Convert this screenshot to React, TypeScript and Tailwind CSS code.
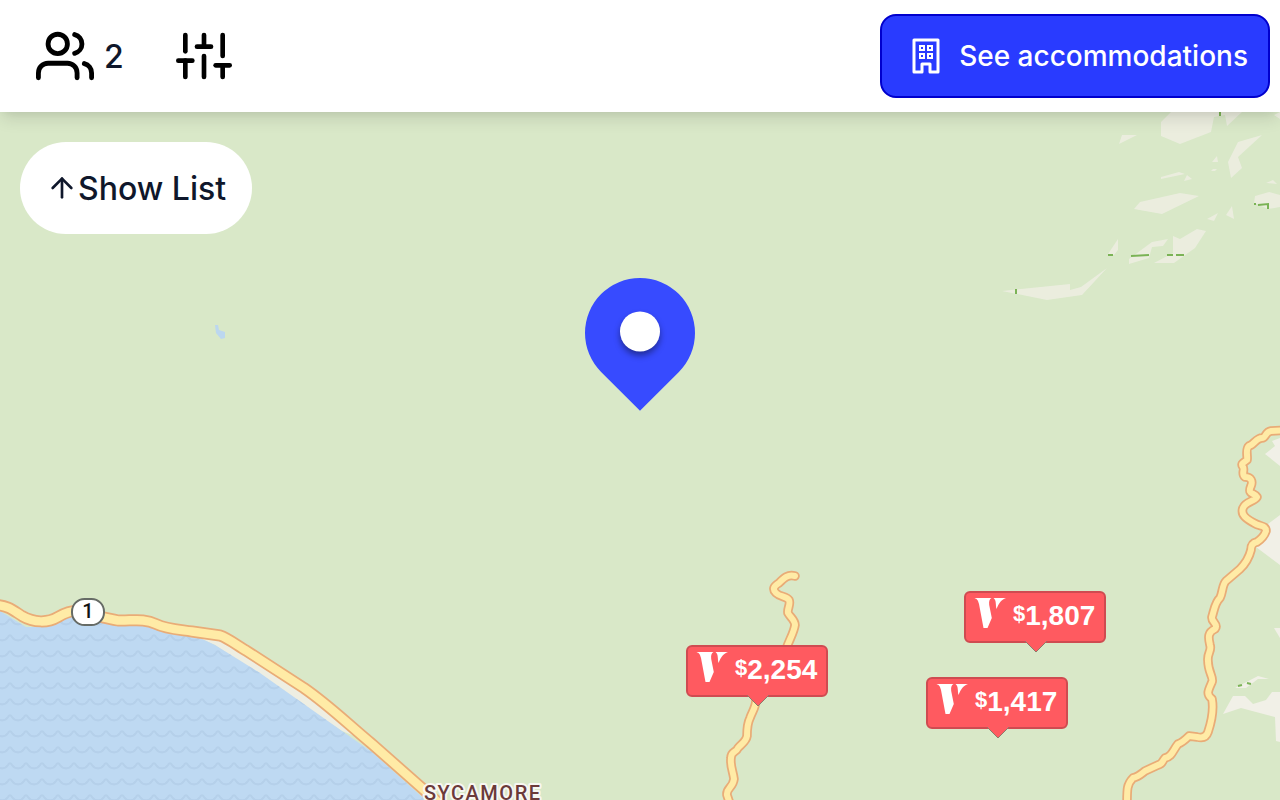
import { FiArrowUp, FiSliders, FiUsers } from 'react-icons/fi'

type Listing = { id: string; price: string; left: string; top: string }

// left / top are relative to the centre of the map
const LISTINGS: Listing[] = [
  { id: 'a', price: '2,254', left: 'left-[calc(50%+46px)]', top: 'top-[calc(50%+189px)]' },
  { id: 'b', price: '1,807', left: 'left-[calc(50%+324px)]', top: 'top-[calc(50%+135px)]' },
  { id: 'c', price: '1,417', left: 'left-[calc(50%+286px)]', top: 'top-[calc(50%+221px)]' },
]

const ROADS = [
  // coast highway
  { w: 8.5, d: 'M-6 605 C8 605 14 611 22 616 C34 623 48 623 58 617 C68 611 76 609 86 612 C98 617 106 618 118 620.500 C132 621 144 618 156 624 C166 629 178 629.500 192 631.500 L220 635.500 C228 638 238 646 246 650.500 L304 688 C330 706 350 726 372 744 L440 804' },
  // canyon road
  { w: 6, d: 'M795 576 C788 574 784 578 779 583 C774 586 772 589 776 593 C780 597 786 596 789 600 C791 604 787 609 788 613 C790 617 795 620 795 625 C794 633 788 642 786 650 L756 700 C756 707 752 712 750 718 C747 724 747 730 747 736 C746 742 741 744 738 748 C736 753 731 751 731 758 C730 766 733 771 734 779 C733 788 726 788 727 795 L730 804' },
  { w: 6, d: 'M1286 430 L1271 431 C1265 432 1266 438 1262 438 C1256 438 1254 445 1249 446 C1245 449 1248 457 1247 460 C1245 462 1240 463 1243 467 C1245 470 1241 474 1245 477 C1251 477 1253 481 1251 486 C1247 495 1254 492 1257 497 C1254 502 1246 501 1243 508 C1240 516 1249 520 1254 523 C1260 527 1266 525 1266 531 C1264 537 1260 540 1257 542 C1252 543 1251 546 1251 550 C1249 558 1245 564 1240 569 L1226 581 C1222 585 1223 592 1220 598 C1215 602 1214 611 1212 617 C1211 622 1219 624 1215 629 C1208 632 1208 637 1210 645 C1212 651 1207 653 1208 661 C1208 672 1214 678 1212 682 C1208 691 1206 694 1212 699 C1214 710 1211 723 1208 732 C1206 738 1201 738 1197 737 L1189 736 C1184 741 1181 743 1178 744 C1173 750 1172 757 1165 758 C1162 761 1163 764 1158 765 L1145 771 C1140 775 1138 777 1133 778 C1127 784 1127 789 1127 804' },
]

const CLEARINGS = [
  'M1171 112 L1161 122 V136 L1180 144 L1211 132 L1214 117 L1225 115 L1227 126 L1242 112Z',
  'M1122 135 L1137 135 L1119 144Z',
  'M1262 135 L1238 142 L1228 162 L1231 178 L1242 168 L1238 157Z',
  'M1212 162 L1217 156 L1218 162Z',
  'M1211 171 L1213 169 L1217 169 L1215 171Z',
  'M1161 177 L1179 172 L1185 174 L1161 179Z',
  'M1184 181 L1187 175 L1192 179Z',
  'M1134 209 L1140 202 L1180 193 L1199 196 L1162 214Z',
  'M1266 183 L1273 180 L1277 184Z',
  'M1255 196 L1269 192 L1280 195 V207 L1268 209 L1254 203Z',
  'M1207 219 L1218 213 L1214 221Z',
  'M1226 215 L1232 206 L1234 219Z',
  'M1108 254 L1118 239 V250 L1114 255Z',
  'M1129 264 V259 L1152 242 L1168 239 L1163 246 L1152 247 L1149 258Z',
  'M1173 253 V236 L1180 239 L1197 229 L1206 231 L1195 248 L1174 263 L1154 263Z',
  'M1002 291 L1070 284 V290 L1081 287 L1107 268 L1082 295 L1047 300Z',
  'M1280 112 L1274 115 L1280 119Z',
]

const BARE_GROUND = [
  'M1280 438 L1272 441 L1275 446 L1265 454 L1280 466Z',
  'M1280 515 L1268 524 L1266 537 L1256 547 L1280 565Z',
  'M1274 628 L1280 628 V638Z',
  'M1235 688 L1258 676 L1269 679 L1258 679 L1246 688Z',
  'M1223 714 L1233 696 L1245 696 L1253 704 L1266 700 L1272 692 H1280 V742 L1276 741 L1275 717 L1241 708Z',
]

const SCRUB = [
  'M1220 112 V116',
  'M1016 289 V294',
  'M1108 255 H1113',
  'M1131 256 L1149 255',
  'M1167 255 H1173 M1176 255 H1184',
  'M1254 204 H1256 M1258 205 L1268 204 V209',
  'M1238 686 L1242 685 M1247 683 L1251 684',
]

const SEA = 'M0 611 L26 627 L46 627 L70 614 L130 620 L200 638 L215 645 L260 673 L342 731 L372 752 L430 804 H0Z'

function TerrainMap() {
  return (
    <svg
      className="absolute inset-0 h-full w-full"
      viewBox="0 112 1280 688"
      preserveAspectRatio="xMidYMid slice"
      aria-hidden="true"
    >
      <defs>
        <pattern id="waves" width="16" height="16" patternUnits="userSpaceOnUse" x="10" y="8">
          <path d="M-2 5 Q0 1.500 2 5 C5 9.500 11 9.500 14 5 Q16 1.500 18 5" fill="none" stroke="#b5d0ea" strokeWidth="2.200" />
        </pattern>
      </defs>
      <rect y="112" width="1280" height="688" fill="#d9e8c8" />
      <g fill="#f0efe6" fillOpacity=".75">
        {CLEARINGS.map((d) => <path key={d} d={d} />)}
      </g>
      <g fill="#f1f0e7">
        {BARE_GROUND.map((d) => <path key={d} d={d} />)}
      </g>
      <g fill="none" stroke="#7bb356" strokeWidth="2">
        {SCRUB.map((d) => <path key={d} d={d} />)}
      </g>
      <path d="M215 325 H218 L219 330 L225 332 V338 L221 339 L216 333Z" fill="#bcd7ef" />
      <path d="M190 634 L230 640 L310 690 L370 742 L342 731 L282 692 L215 645Z" fill="#eeeee2" />
      <path d={SEA} fill="#bed9f2" />
      <path d={SEA} fill="url(#waves)" />
      {ROADS.map(({ d, w }) => (
        <g key={d} fill="none" strokeLinecap="round" strokeLinejoin="round">
          <path d={d} stroke="#e9ac77" strokeWidth={w + 3.5} />
          <path d={d} stroke="#ffeba6" strokeWidth={w} />
        </g>
      ))}
      <rect x="72" y="599" width="32" height="26" rx="12.500" fill="#fff" stroke="#666b66" strokeWidth="2" />
      <text x="88" y="618" textAnchor="middle" fontSize="20" fontWeight="500" fontFamily="Roboto, sans-serif" fill="#111">1</text>
      <text
        x="424" y="800" fontSize="20" fontWeight="500" letterSpacing="1.5" fontFamily="Roboto, sans-serif"
        fill="#6b3a3a" stroke="#f7f7f2" strokeWidth="4" strokeLinejoin="round" paintOrder="stroke"
      >
        SYCAMORE
      </text>
    </svg>
  )
}

function BuildingIcon() {
  return (
    <svg className="h-9 w-7 shrink-0" viewBox="0 0 28 36" fill="none" stroke="currentColor" aria-hidden="true">
      <path d="M2 2 H26 V34 H18 V26 H10 V34 H2Z" strokeWidth="3" strokeLinejoin="round" />
      <path d="M8 8 h4 v4 h-4Z M16 8 h4 v4 h-4Z M8 16 h4 v4 h-4Z M16 16 h4 v4 h-4Z" strokeWidth="2" />
    </svg>
  )
}

function LocationPin() {
  return (
    <svg
      className="absolute left-1/2 top-[calc(50%-178px)] w-[110px] -translate-x-1/2"
      viewBox="0 0 110 133"
      role="img"
      aria-label="Selected location"
    >
      <path d="M55 132.800 L16.100 93.900 A55 55 0 1 1 93.900 93.900Z" fill="#374bff" />
      <circle className="drop-shadow-[0_4px_3px_rgba(0,0,0,0.4)]" cx="55" cy="53.500" r="20" fill="#fff" />
    </svg>
  )
}

function PriceTag({ price, left, top }: Listing) {
  return (
    <button
      type="button"
      className={`absolute ${left} ${top} flex h-[52px] w-[142px] items-start rounded-md border-2 border-[#cf4b51] bg-[#ff5a60] pl-2 pt-1 text-white`}
    >
      <svg className="h-8 w-8 shrink-0" viewBox="0 0 32 32" fill="currentColor" aria-hidden="true">
        <path d="M0.500 1 H17.500 C15.500 2 14.800 4 15.200 8 L17.800 21 L13.500 31 H9.500 L5 7 C4 3 3 2 0.500 1Z" />
        <path d="M19.500 1 H32 C27 3 25 6 22.500 12 C21.500 8 22.500 3 19.500 1Z" />
      </svg>
      <span className="ml-[7px] flex items-start pt-px font-['Liberation_Sans',sans-serif] font-bold">
        <span className="text-[22px] leading-8">$</span>
        <span className="text-[28px] leading-9">{price}</span>
      </span>
      <svg className="absolute left-[58px] top-12 w-6" viewBox="0 0 24 12" aria-hidden="true">
        <path d="M1 0 L12 11 L23 0" fill="#ff5a60" stroke="#8d7b6b" strokeWidth="1" />
      </svg>
    </button>
  )
}

export default function App() {
  return (
    <div className="flex h-screen flex-col overflow-hidden font-[Inter,sans-serif] text-slate-900">
      <header className="z-10 flex h-28 shrink-0 items-center justify-between bg-white pl-9 pr-[10px] shadow-[0_8px_16px_-2px_rgba(0,0,0,0.12),0_4px_8px_-4px_rgba(0,0,0,0.06)]">
        <div className="flex items-center gap-[52px]">
          <button type="button" aria-label="Guests" className="flex items-center gap-[10px]">
            <FiUsers className="size-[58px] text-black" />
            <span className="pt-px text-[32px] leading-10 font-medium">2</span>
          </button>
          <button type="button" aria-label="Filters">
            <FiSliders className="size-14 text-black" />
          </button>
        </div>
        <button
          type="button"
          className="flex h-[84px] items-center gap-[19px] rounded-2xl border-2 border-[#0000cd] bg-[#293bff] pl-[30px] pr-5 text-[28px] leading-10 font-medium text-white"
        >
          <BuildingIcon />
          See accommodations
        </button>
      </header>

      <main className="relative flex-1 overflow-hidden">
        <TerrainMap />
        <LocationPin />
        {LISTINGS.map((listing) => <PriceTag key={listing.id} {...listing} />)}
        <button
          type="button"
          className="relative ml-5 mt-[30px] flex h-[92px] items-center rounded-full bg-white px-[26px] text-[32px] leading-10 font-medium"
        >
          <FiArrowUp className="size-8" />
          <span className="pt-px">Show List</span>
        </button>
      </main>
    </div>
  )
}
